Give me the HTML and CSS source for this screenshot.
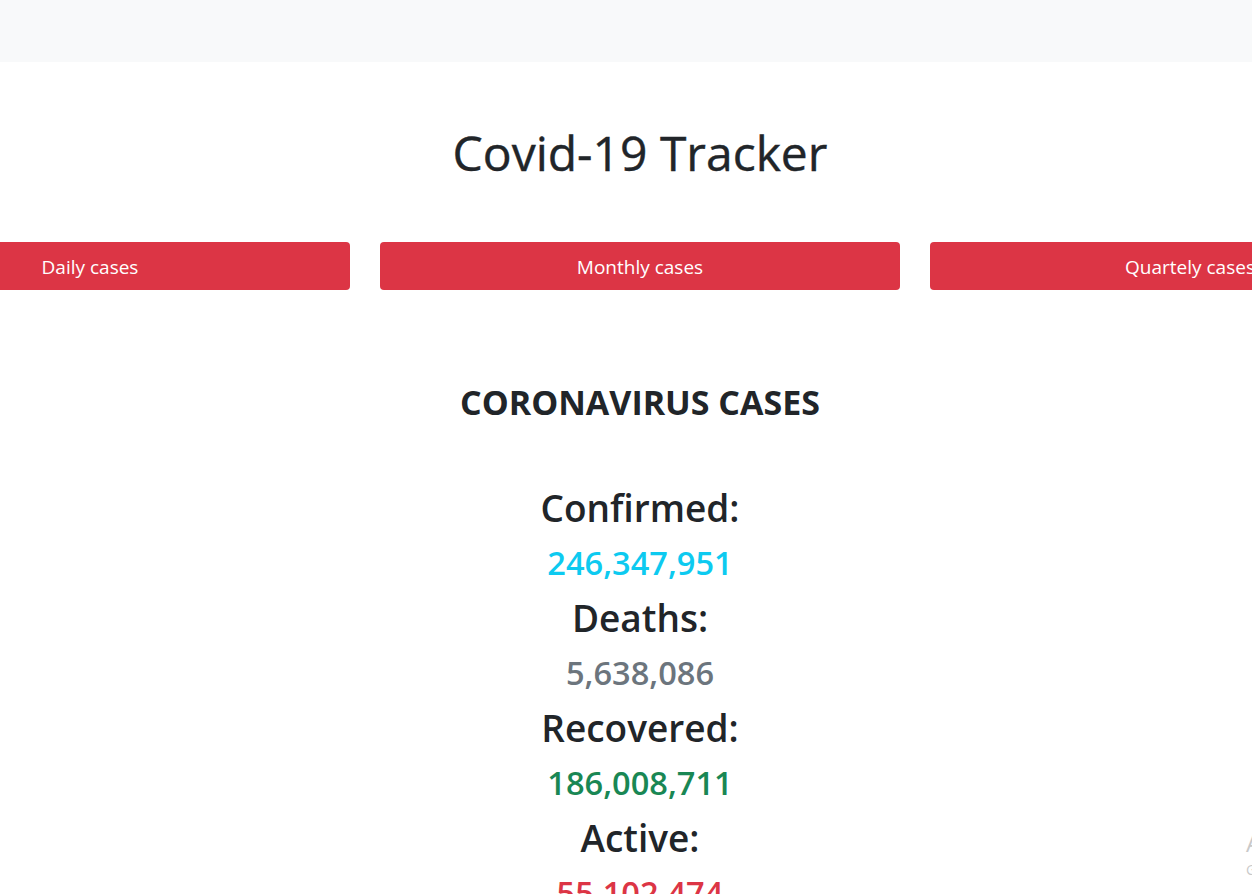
FILE: index.html
```html
<!DOCTYPE html>
<html lang="en">
<head>
<meta charset="utf-8">
<title>Covid-19 Tracker</title>
<link rel="stylesheet" href="styles.css">
</head>
<body>
<nav class="navbar"></nav>
<main class="page">
  <h1 class="title">Covid-19 Tracker</h1>
  <div class="btn-row">
    <button class="btn">Daily cases</button>
    <button class="btn">Monthly cases</button>
    <button class="btn">Quartely cases</button>
  </div>
  <h2 class="section">CORONAVIRUS CASES</h2>
  <div class="stats">
    <div class="label">Confirmed:</div>
    <div class="num confirmed">246,347,951</div>
    <div class="label">Deaths:</div>
    <div class="num deaths">5,638,086</div>
    <div class="label">Recovered:</div>
    <div class="num recovered">186,008,711</div>
    <div class="label">Active:</div>
    <div class="num active">55,102,474</div>
  </div>
</main>
<div class="watermark">
  <div class="wm-title">Activate Windows</div>
  <div class="wm-sub">Go to Settings to activate Windows.</div>
</div>
</body>
</html>
```

FILE: styles.css
```css
html, body {
  margin: 0;
  padding: 0;
  overflow: hidden;
  background: #fff;
}
body {
  font-family: "Open Sans", "Noto Sans", sans-serif;
  color: #212529;
  width: 1252px;
  height: 894px;
  position: relative;
}
.navbar {
  height: 62px;
  background: #f8f9fa;
}
.page {
  width: 1280px;
  display: flex;
  flex-direction: column;
  align-items: center;
}
.title {
  margin: 60px 0 0;
  font-size: 48px;
  font-weight: 400;
  line-height: 62px;
  height: 62px;
  -webkit-text-stroke: 0.4px #212529;
}
.btn-row {
  margin-top: 58px;
  display: flex;
  gap: 30px;
  justify-content: center;
  width: 1280px;
}
.btn {
  flex: 0 0 520px;
  height: 48px;
  border: none;
  border-radius: 4px;
  background: #dc3545;
  color: #fff;
  font-family: inherit;
  font-size: 19px;
  padding: 0;
  padding-top: 1px;
}
.section {
  margin: 92px 0 0;
  font-size: 34px;
  font-weight: 700;
  line-height: 40px;
}
.stats {
  margin-top: 58px;
  display: flex;
  flex-direction: column;
  align-items: center;
}
.label {
  font-size: 37px;
  font-weight: 600;
  line-height: 55px;
}
.num {
  font-size: 32.6px;
  font-weight: 600;
  line-height: 55px;
}
.confirmed { color: #0dcaf0; }
.deaths { color: #6c757d; }
.recovered { color: #198754; }
.active { color: #dc3545; }
.watermark {
  position: absolute;
  left: 1246px;
  top: 826px;
  color: #c9c9c9;
  white-space: nowrap;
}
.wm-title {
  font-size: 24px;
  line-height: 34px;
}
.wm-sub {
  font-size: 14px;
  line-height: 20px;
}
```
